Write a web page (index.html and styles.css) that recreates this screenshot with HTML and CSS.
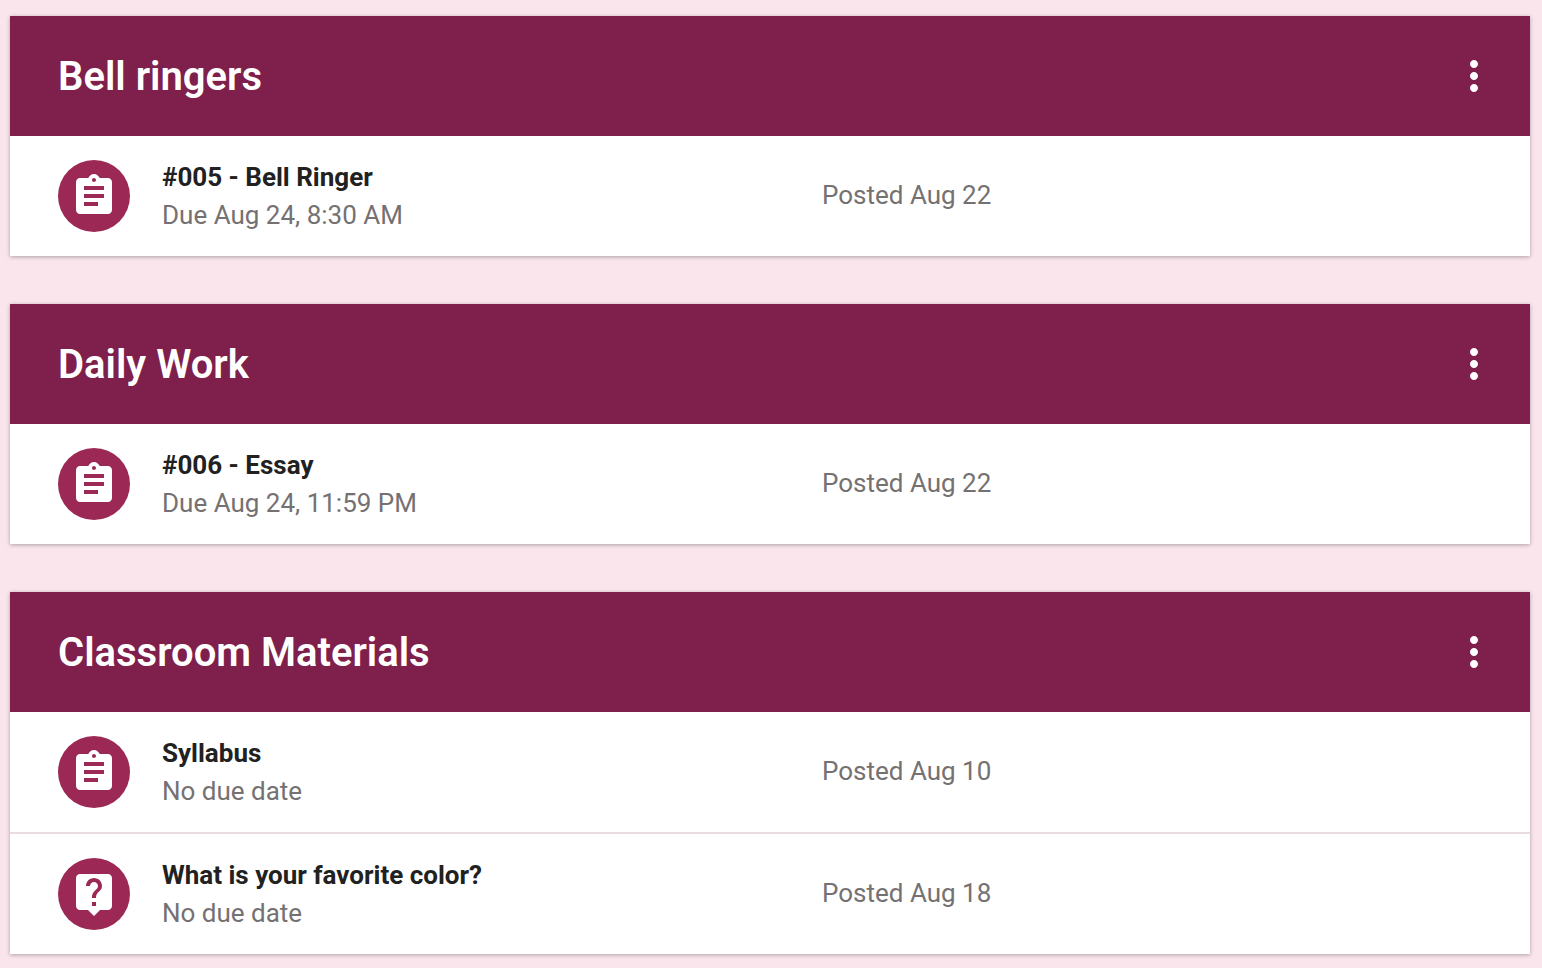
FILE: index.html
```html
<!DOCTYPE html>
<html lang="en">
<head>
  <meta charset="UTF-8">
  <title>Classwork</title>
  <link rel="stylesheet" href="styles.css">
</head>
<body>

  <!-- Shared icons -->
  <svg class="sprite" aria-hidden="true">
    <symbol id="assignment" viewBox="0 0 24 24">
      <path d="M19 3h-4.18C14.4 1.84 13.3 1 12 1c-1.3 0-2.4.84-2.82 2H5c-1.1 0-2 .9-2 2v14c0 1.1.9 2 2 2h14c1.1 0 2-.9 2-2V5c0-1.1-.9-2-2-2zm-7 0c.55 0 1 .45 1 1s-.45 1-1 1-1-.45-1-1 .45-1 1-1zm2 14H7v-2h7v2zm3-4H7v-2h10v2zm0-4H7V7h10v2z"/>
    </symbol>
    <symbol id="question" viewBox="0 0 24 24">
      <path d="M19 2H5c-1.11 0-2 .9-2 2v14c0 1.1.89 2 2 2h4l3 3 3-3h4c1.1 0 2-.9 2-2V4c0-1.1-.9-2-2-2zm-6 16h-2v-2h2v2zm2.07-7.75l-.9.92C13.45 11.9 13 12.5 13 14h-2v-.5c0-1.1.45-2.1 1.17-2.83l1.24-1.26c.37-.36.59-.86.59-1.41 0-1.1-.9-2-2-2s-2 .9-2 2H8c0-2.21 1.79-4 4-4s4 1.79 4 4c0 .88-.36 1.68-.93 2.25z"/>
    </symbol>
    <symbol id="more" viewBox="0 0 24 24">
      <path d="M12 8c1.1 0 2-.9 2-2s-.9-2-2-2-2 .9-2 2 .9 2 2 2zm0 2c-1.1 0-2 .9-2 2s.9 2 2 2 2-.9 2-2-.9-2-2-2zm0 6c-1.1 0-2 .9-2 2s.9 2 2 2 2-.9 2-2-.9-2-2-2z"/>
    </symbol>
  </svg>

  <main>
    <section class="topic">
      <header>
        <h2>Bell ringers</h2>
        <button type="button" aria-label="Bell ringers options"><svg><use href="#more"/></svg></button>
      </header>
      <ul>
        <li>
          <span class="icon"><svg><use href="#assignment"/></svg></span>
          <div class="details">
            <h3>#005 - Bell Ringer</h3>
            <p>Due Aug 24, 8:30 AM</p>
          </div>
          <p class="posted">Posted Aug 22</p>
        </li>
      </ul>
    </section>

    <section class="topic">
      <header>
        <h2>Daily Work</h2>
        <button type="button" aria-label="Daily Work options"><svg><use href="#more"/></svg></button>
      </header>
      <ul>
        <li>
          <span class="icon"><svg><use href="#assignment"/></svg></span>
          <div class="details">
            <h3>#006 - Essay</h3>
            <p>Due Aug 24, 11:59 PM</p>
          </div>
          <p class="posted">Posted Aug 22</p>
        </li>
      </ul>
    </section>

    <section class="topic">
      <header>
        <h2>Classroom Materials</h2>
        <button type="button" aria-label="Classroom Materials options"><svg><use href="#more"/></svg></button>
      </header>
      <ul>
        <li>
          <span class="icon"><svg><use href="#assignment"/></svg></span>
          <div class="details">
            <h3>Syllabus</h3>
            <p>No due date</p>
          </div>
          <p class="posted">Posted Aug 10</p>
        </li>
        <li>
          <span class="icon"><svg><use href="#question"/></svg></span>
          <div class="details">
            <h3>What is your favorite color?</h3>
            <p>No due date</p>
          </div>
          <p class="posted">Posted Aug 18</p>
        </li>
      </ul>
    </section>
  </main>

</body>
</html>
```

FILE: styles.css
```css
body {
  margin: 0;
  background-color: #f9e5eb;
  font-family: Roboto, sans-serif;
  font-size: 26px;
  line-height: 38px;
  color: #757172;
}

h2,
h3,
p,
ul {
  margin: 0;
  padding: 0;
}

.sprite {
  display: none;
}

main {
  display: flex;
  flex-direction: column;
  gap: 48px;
  padding: 16px 12px 14px 10px;
}

.topic {
  background-color: white;
  box-shadow: 0 1px 4px rgba(0, 0, 0, 0.3);
}

.topic header {
  display: flex;
  align-items: center;
  justify-content: space-between;
  height: 120px;
  padding: 0 32px 0 48px;
  background-color: #7f1f4b;
  color: white;
}

h2 {
  font-size: 40px;
  line-height: 47px;
  font-weight: 600;
}

button {
  display: flex;
  padding: 0;
  border: none;
  background: none;
  color: white;
  cursor: pointer;
}

svg {
  width: 48px;
  height: 48px;
  fill: currentColor;
}

ul {
  list-style: none;
}

li {
  display: grid;
  grid-template-columns: 72px 628px 1fr;
  column-gap: 32px;
  align-items: center;
  height: 120px;
  padding: 0 48px;
}

li + li {
  border-top: 2px solid #e8dbe1;
}

.icon {
  display: flex;
  align-items: center;
  justify-content: center;
  height: 72px;
  border-radius: 50%;
  background-color: #9c2955;
  color: white;
}

.posted {
  padding-bottom: 2px;
}

h3 {
  font-size: 26px;
  line-height: 38px;
  font-weight: 700;
  color: #212121;
}
```
